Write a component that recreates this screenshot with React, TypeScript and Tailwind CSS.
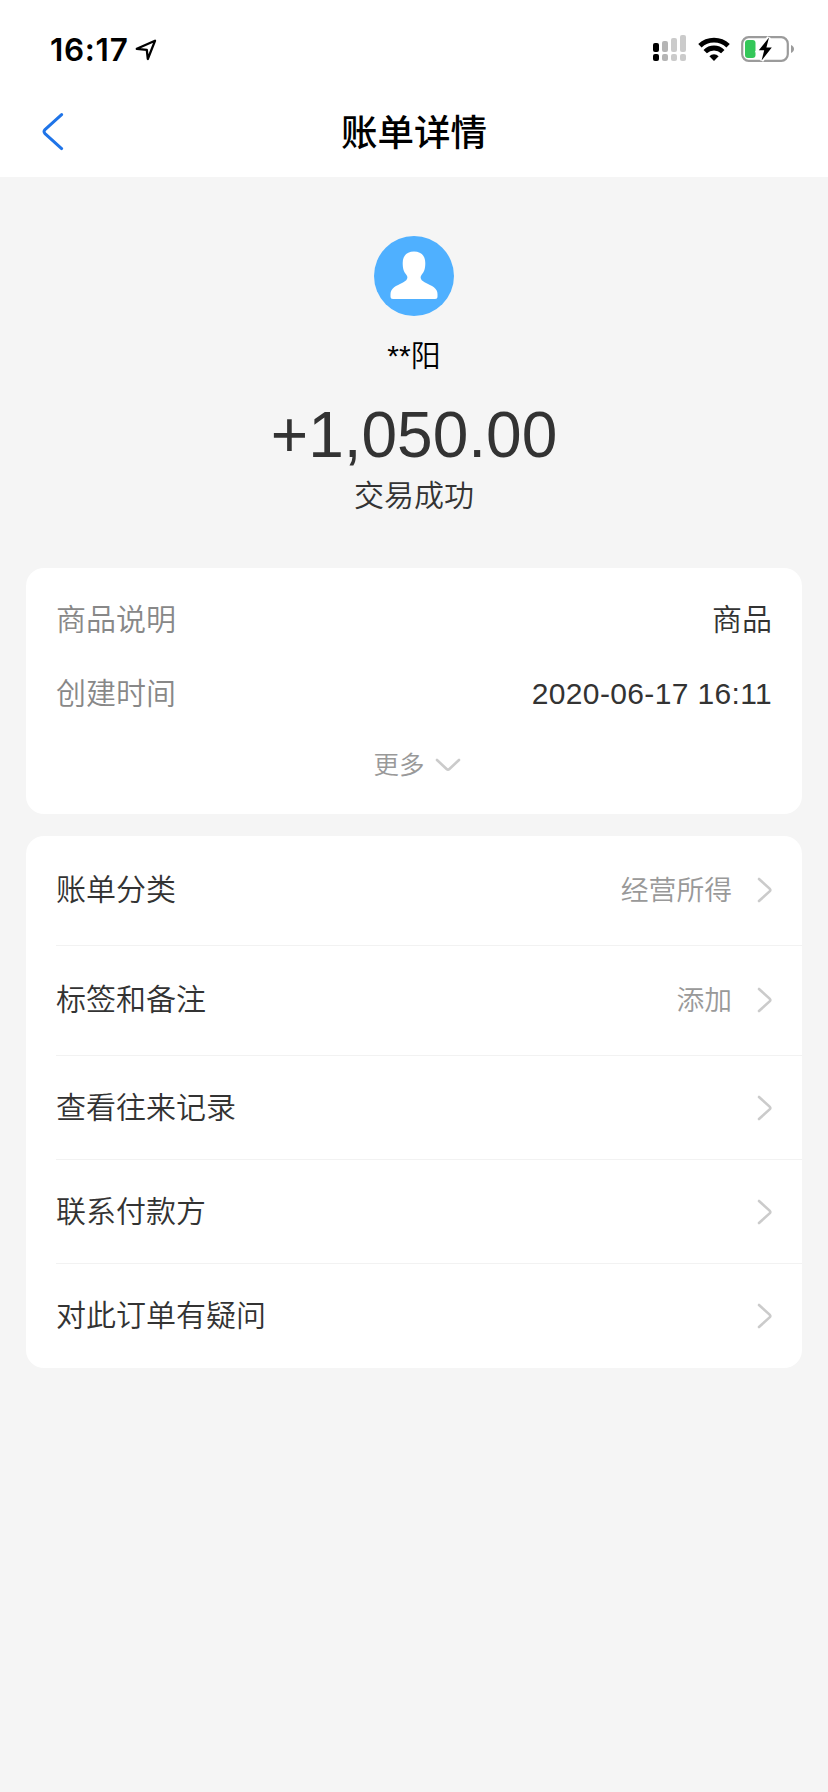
import type { ReactNode } from 'react'

type MenuItem = {
  label: string
  value?: string
  height: string
}

const menuItems: MenuItem[] = [
  { label: '账单分类', value: '经营所得', height: 'h-[110px] pb-0.5' },
  { label: '标签和备注', value: '添加', height: 'h-[110px] pb-0.5' },
  { label: '查看往来记录', height: 'h-[104px]' },
  { label: '联系付款方', height: 'h-[104px]' },
  { label: '对此订单有疑问', height: 'h-[104px]' },
]

function LocationIcon() {
  return (
    <svg width="22" height="22" viewBox="0 0 22 22" fill="none" className="ml-[7px]">
      <path
        d="M1.8 9.8 L20 1.8 L12.8 20 L11.8 10.8 Z"
        stroke="#000"
        strokeWidth="2.3"
        strokeLinejoin="round"
      />
    </svg>
  )
}

function SignalIcon() {
  return (
    <svg width="34" height="28" viewBox="0 0 34 28">
      <rect x="0" y="8" width="6" height="9" rx="2" fill="#000" />
      <rect x="9" y="6" width="6" height="11" rx="2" fill="#b5b5b5" />
      <rect x="18" y="3" width="6" height="14" rx="2" fill="#cbcbcb" />
      <rect x="27" y="0" width="6" height="17" rx="2" fill="#cbcbcb" />
      <rect x="0" y="19" width="6" height="7" rx="2" fill="#000" />
      <rect x="9" y="19" width="6" height="7" rx="2" fill="#b5b5b5" />
      <rect x="18" y="19" width="6" height="7" rx="2" fill="#cbcbcb" />
      <rect x="27" y="19" width="6" height="7" rx="2" fill="#cbcbcb" />
    </svg>
  )
}

function WifiIcon() {
  return (
    <svg width="32" height="24" viewBox="0 0 32 24" fill="none" stroke="#000" strokeWidth="4.8">
      <path d="M1.9 8.8 A20.3 20.3 0 0 1 30.1 8.8" />
      <path d="M7.2 14.6 A12.6 12.6 0 0 1 24.8 14.6" />
      <path d="M11.4 19.2 A6.6 6.6 0 0 1 20.6 19.2 L16 24 Z" fill="#000" stroke="none" />
    </svg>
  )
}

function BatteryIcon() {
  return (
    <svg width="54" height="26" viewBox="0 0 54 26">
      <rect x="1.2" y="1.2" width="45.6" height="23.6" rx="6.5" fill="none" stroke="#9b9b9b" strokeWidth="2.2" />
      <path d="M50 9 C54 10.6 54 15.4 50 17 Z" fill="#9b9b9b" />
      <rect x="4" y="4" width="10.5" height="18" rx="3" fill="#34c759" />
      <path
        d="M28 1.4 L17.8 14.2 H23.2 L20.6 24.6 L30.8 11.6 H25.4 Z"
        fill="#000"
        stroke="#fff"
        strokeWidth="4"
        paintOrder="stroke"
      />
    </svg>
  )
}

function BackIcon() {
  return (
    <svg width="22" height="38" viewBox="0 0 22 38" fill="none" className="mb-px">
      <path
        d="M19.6 1.6 L3 16.6 Q1 18.6 3 20.6 L19.6 35.6"
        stroke="#1f74e8"
        strokeWidth="3"
        strokeLinecap="round"
      />
    </svg>
  )
}

function ChevronRight() {
  return (
    <svg width="16" height="26" viewBox="0 0 16 26" fill="none">
      <path d="M2 2 L12.6 11.6 Q14 13 12.6 14.4 L2 24" stroke="#cbcbcb" strokeWidth="2.6" strokeLinecap="round" />
    </svg>
  )
}

function ChevronDown() {
  return (
    <svg width="26" height="14" viewBox="0 0 26 14" fill="none" className="mb-px">
      <path d="M2 2 L11.6 11 Q13 12.3 14.4 11 L24 2" stroke="#cbcbcb" strokeWidth="2.6" strokeLinecap="round" />
    </svg>
  )
}

function Avatar() {
  return (
    <svg width="80" height="80" viewBox="0 0 80 80">
      <circle cx="40" cy="40" r="40" fill="#4fb0ff" />
      <path
        d="M40 15.5 C47 15.5 51.3 19.5 51.3 27 C51.3 33 50 36 47.5 39 C45.5 42 47 44.5 51 46.5 C58 50 63.5 52 63.5 58 V60.5 Q63.5 63 61 63 H19 Q16.5 63 16.5 60.5 V58 C16.5 52 22 50 29 46.5 C33 44.5 34.5 42 32.5 39 C30 36 28.7 33 28.7 27 C28.7 19.5 33 15.5 40 15.5 Z"
        fill="#fff"
      />
    </svg>
  )
}

function InfoRow({ label, children }: { label: string; children: ReactNode }) {
  return (
    <div className="flex h-[74px] items-center justify-between px-[30px] text-[30px]">
      <span className="text-[#888]">{label}</span>
      {children}
    </div>
  )
}

export default function App() {
  return (
    <div className="min-h-[1792px] w-[828px] bg-[#f5f5f5] font-['Liberation_Sans','Noto_Sans_CJK_SC',sans-serif] leading-none font-[350] text-[#333]">
      {/* Status bar */}
      <div className="flex h-[88px] items-start justify-between bg-white pr-[33px] pl-[50px]">
        <div className="flex h-[99px] items-center text-black">
          <span className="font-['Inter',sans-serif] text-[31.5px] font-semibold tracking-[0.7px]">16:17</span>
          <LocationIcon />
        </div>
        <div className="flex h-[98px] items-center">
          <SignalIcon />
          <span className="ml-[11px]">
            <WifiIcon />
          </span>
          <span className="ml-[11px]">
            <BatteryIcon />
          </span>
        </div>
      </div>

      {/* Title bar */}
      <header className="flex h-[89px] items-center bg-white pl-[42px]">
        <BackIcon />
        <h1 className="flex-1 pt-[3px] pr-16 text-center text-[36.5px] font-medium text-black">账单详情</h1>
      </header>

      {/* Payment summary */}
      <section className="flex h-[391px] flex-col items-center pt-[59px]">
        <Avatar />
        <div className="mt-[25px] text-[30px] text-black">**阳</div>
        <div className="mt-8 text-[64px]">+1,050.00</div>
        <div className="mt-3.5 text-[30px]">交易成功</div>
      </section>

      <main className="flex flex-col gap-[22px] px-[26px]">
        <section className="h-[246px] rounded-[18px] bg-white pt-[15px]">
          <InfoRow label="商品说明">
            <span>商品</span>
          </InfoRow>
          <InfoRow label="创建时间">
            <span className="tracking-[0.35px]">2020-06-17 16:11</span>
          </InfoRow>
          <button className="mx-auto flex h-[68px] items-center gap-2.5 pt-px pl-1.5 text-[25.5px] text-[#999]">
            更多
            <ChevronDown />
          </button>
        </section>

        <section className="rounded-[18px] bg-white pl-[30px]">
          {menuItems.map((item, index) => (
            <div
              key={item.label}
              className={`flex items-center pr-[29px] ${item.height} ${
                index < menuItems.length - 1 ? 'border-b border-[#f2f2f2]' : ''
              }`}
            >
              <span className="flex-1 text-[30px]">{item.label}</span>
              {item.value && <span className="mr-[25px] pt-0.5 text-[27.8px] text-[#999]">{item.value}</span>}
              <ChevronRight />
            </div>
          ))}
        </section>
      </main>
    </div>
  )
}
